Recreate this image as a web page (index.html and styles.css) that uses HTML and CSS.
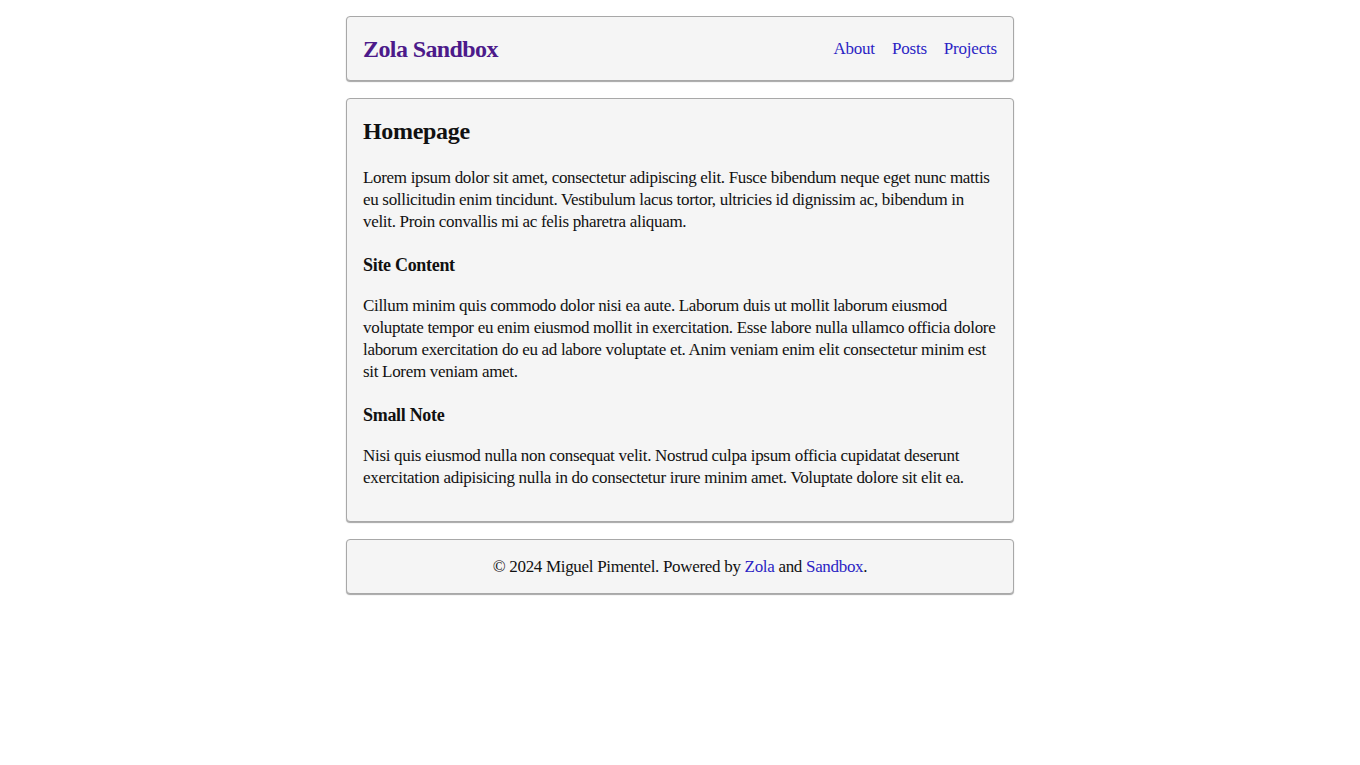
FILE: index.html
```html
<!DOCTYPE html>
<html lang="en">
<head>
<meta charset="utf-8">
<title>Zola Sandbox</title>
<link rel="stylesheet" href="styles.css">
</head>
<body>
<div class="page">
  <header class="card site-header">
    <a class="brand" href="#">Zola Sandbox</a>
    <nav class="nav">
      <a href="#">About</a>
      <a href="#">Posts</a>
      <a href="#">Projects</a>
    </nav>
  </header>
  <main class="card content">
    <h1 class="title">Homepage</h1>
    <p class="para">Lorem ipsum dolor sit amet, consectetur adipiscing elit. Fusce bibendum neque eget nunc mattis eu sollicitudin enim tincidunt. Vestibulum lacus tortor, ultricies id dignissim ac, bibendum in velit. Proin convallis mi ac felis pharetra aliquam.</p>
    <h3 class="subtitle">Site Content</h3>
    <p class="para">Cillum minim quis commodo dolor nisi ea aute. Laborum duis ut mollit laborum eiusmod voluptate tempor eu enim eiusmod mollit in exercitation. Esse labore nulla ullamco officia dolore laborum exercitation do eu ad labore voluptate et. Anim veniam enim elit consectetur minim est sit Lorem veniam amet.</p>
    <h3 class="subtitle">Small Note</h3>
    <p class="para">Nisi quis eiusmod nulla non consequat velit. Nostrud culpa ipsum officia cupidatat deserunt exercitation adipisicing nulla in do consectetur irure minim amet. Voluptate dolore sit elit ea.</p>
  </main>
  <footer class="card site-footer">
    © 2024 Miguel Pimentel. Powered by <a href="#">Zola</a> and <a href="#">Sandbox</a>.
  </footer>
</div>
</body>
</html>
```
FILE: styles.css
```css
html, body {
  margin: 0;
  padding: 0;
  background: #ffffff;
}
body {
  font-family: "Liberation Serif", "DejaVu Serif", serif;
  font-size: 17px;
  line-height: 22px;
  letter-spacing: -0.31px;
  color: #111111;
}
a {
  color: #2b1fc4;
  text-decoration: none;
}
.page {
  width: 668px;
  margin: 16px auto;
  display: flex;
  flex-direction: column;
  gap: 17px;
}
.card {
  box-sizing: border-box;
  background: #f5f5f5;
  border: 1px solid #a8a8a8;
  border-radius: 4px;
  box-shadow: 0 1px 1px rgba(0, 0, 0, 0.35);
}
.site-header {
  height: 65px;
  padding: 0 16px;
  display: flex;
  align-items: center;
  justify-content: space-between;
}
.brand {
  color: #4c1a8a;
  font-weight: bold;
  font-size: 24px;
  line-height: 32px;
  letter-spacing: -0.6px;
}
.nav {
  display: flex;
  gap: 17px;
  font-size: 17px;
  letter-spacing: -0.2px;
}
.content {
  padding: 16px 16px 0;
}
.title {
  margin: 0 0 20px;
  font-size: 24px;
  line-height: 32px;
  color: #111;
}
.subtitle {
  margin: 21px 0 19px;
  font-size: 18px;
  line-height: 22px;
  color: #111;
}
.para {
  margin: 0;
}
.para:last-child {
  margin-bottom: 32px;
}
.site-footer {
  padding: 16px;
  text-align: center;
  height: 55px;
}
```
